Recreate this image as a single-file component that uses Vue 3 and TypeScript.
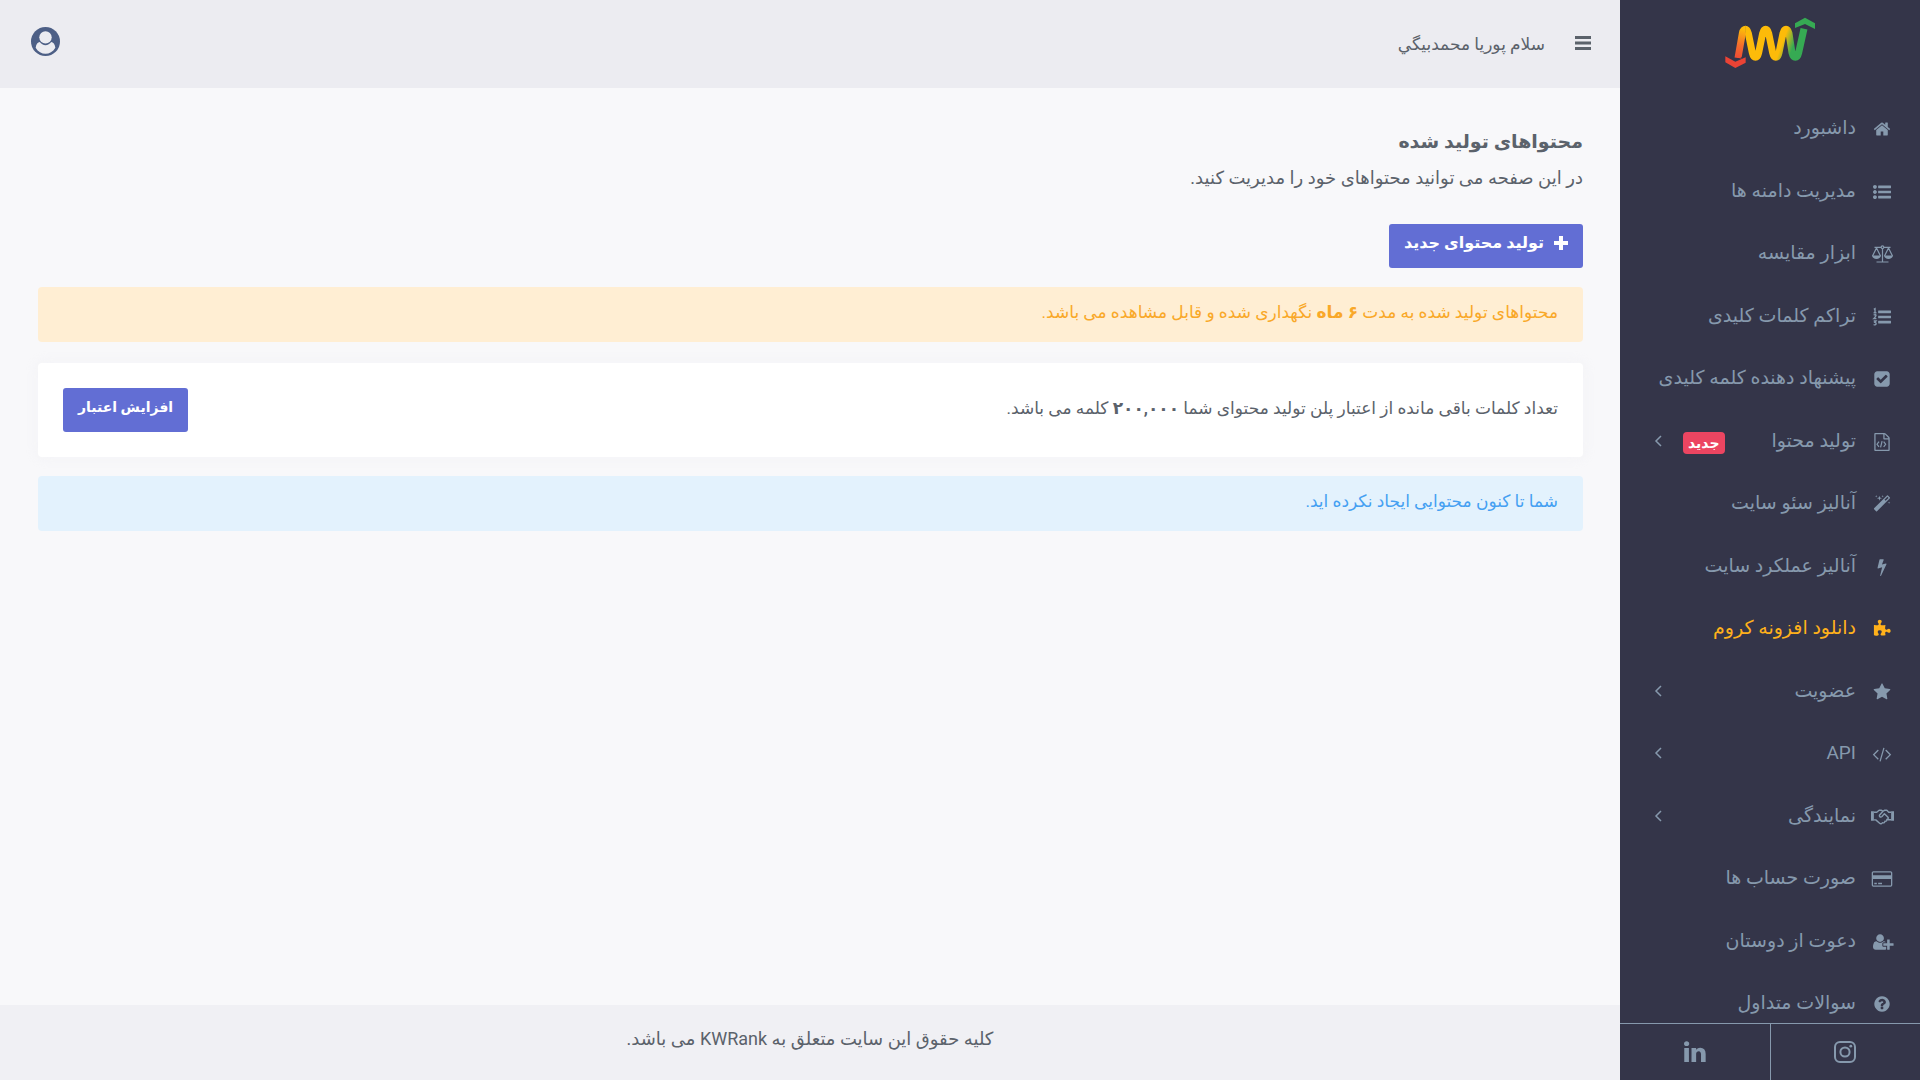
<script setup lang="ts">
interface NavItem {
  label: string
  icon: string
  badge?: string
  expandable?: boolean
  highlight?: boolean
}

const nav: NavItem[] = [
  { label: 'داشبورد', icon: 'home' },
  { label: 'مدیریت دامنه ها', icon: 'list' },
  { label: 'ابزار مقایسه', icon: 'scale' },
  { label: 'تراکم کلمات کلیدی', icon: 'numbered' },
  { label: 'پیشنهاد دهنده کلمه کلیدی', icon: 'check' },
  { label: 'تولید محتوا', icon: 'file', badge: 'جدید', expandable: true },
  { label: 'آنالیز سئو سایت', icon: 'magic' },
  { label: 'آنالیز عملکرد سایت', icon: 'bolt' },
  { label: 'دانلود افزونه کروم', icon: 'puzzle', highlight: true },
  { label: 'عضویت', icon: 'star', expandable: true },
  { label: 'API', icon: 'code', expandable: true },
  { label: 'نمایندگی', icon: 'handshake', expandable: true },
  { label: 'صورت حساب ها', icon: 'card' },
  { label: 'دعوت از دوستان', icon: 'userPlus' },
  { label: 'سوالات متداول', icon: 'question' },
]

const listBars =
  'M1792 1312v192q0 13-9.500 22.500t-22.500 9.500h-1216q-13 0-22.500-9.500t-9.500-22.500v-192q0-13 9.500-22.500t22.500-9.500h1216q13 0 22.500 9.500t9.500 22.500zm0-512v192q0 13-9.500 22.500t-22.500 9.500h-1216q-13 0-22.500-9.500t-9.500-22.500v-192q0-13 9.500-22.500t22.500-9.500h1216q13 0 22.500 9.500t9.500 22.500zm0-512v192q0 13-9.500 22.500t-22.500 9.500h-1216q-13 0-22.500-9.500t-9.500-22.500v-192q0-13 9.500-22.500t22.500-9.500h1216q13 0 22.500 9.500t9.500 22.500z'

const filled: Record<string, string> = {
  home: 'M1472 992v480q0 26-19 45t-45 19h-384v-384h-256v384h-384q-26 0-45-19t-19-45v-480q0-1 .5-3t.5-3l575-474 575 474q1 2 1 6zm223-69l-62 74q-8 9-21 11h-3q-13 0-21-7l-692-577-692 577q-12 8-24 7-13-2-21-11l-62-74q-8-10-7-23.5t11-21.500l719-599q32-26 76-26t76 26l244 204v-195q0-14 9-23t23-9h192q14 0 23 9t9 23v408l219 182q10 8 11 21.500t-7 23.500z',
  list:
    'M384 1408q0 80-56 136t-136 56-136-56-56-136 56-136 136-56 136 56 56 136zm0-512q0 80-56 136t-136 56-136-56-56-136 56-136 136-56 136 56 56 136zm0-512q0 80-56 136t-136 56-136-56-56-136 56-136 136-56 136 56 56 136z' +
    listBars,
  numbered: listBars,
  check: 'M813 1299l614-614q19-19 19-45t-19-45l-102-102q-19-19-45-19t-45 19l-467 467-211-211q-19-19-45-19t-45 19l-102 102q-19 19-19 45t19 45l358 358q19 19 45 19t45-19zm851-883v960q0 119-84.500 203.500t-203.500 84.500h-960q-119 0-203.500-84.500t-84.500-203.500v-960q0-119 84.500-203.500t203.500-84.500h960q119 0 203.500 84.500t84.500 203.500z',
  file: 'M1596 380q28 28 48 76t20 88v1152q0 40-28 68t-68 28h-1344q-40 0-68-28t-28-68v-1600q0-40 28-68t68-28h896q40 0 88 20t76 48zm-444-244v376h376q-10-29-22-41l-313-313q-12-12-41-22zm384 1528v-1024h-416q-40 0-68-28t-28-68v-416h-768v1536h1280z',
  magic: 'M1254 581l293-293-107-107-293 293zm447-293q0 27-18 45l-1286 1286q-18 18-45 18t-45-18l-198-198q-18-18-18-45t18-45l1286-1286q18-18 45-18t45 18l198 198q18 18 18 45zm-1351-190l98 30-98 30-30 98-30-98-98-30 98-30 30-98zm350 162l196 60-196 60-60 196-60-196-196-60 196-60 60-196zm930 478l98 30-98 30-30 98-30-98-98-30 98-30 30-98zm-640-640l98 30-98 30-30 98-30-98-98-30 98-30 30-98z',
  bolt: 'M1333 566q18 20 7 44l-540 1157q-13 25-42 25-4 0-14-2-17-5-25.500-19t-4.500-30l197-808-406 101q-4 1-12 1-18 0-31-11-18-15-13-39l201-825q4-14 16-23t28-9h328q19 0 32 12.500t13 29.500q0 8-5 18l-171 463 396-98q8-2 12-2 19 0 34 15z',
  puzzle: 'M1755 1083q0 81-44.500 135t-123.500 54q-41 0-77.500-17.500t-59-38-56.500-38-71-17.500q-110 0-110 124 0 39 16 115t15 115v5q-22 0-33 1-34 3-97.500 11.500t-115.500 13.500-98 5q-61 0-103-26.500t-42-83.500q0-37 17.500-71t38-56.500 38-59 17.500-77.500q0-79-54-123.500t-135-44.500q-84 0-143 45.500t-59 127.500q0 43 15 83t33.500 64.500 33.500 53 15 50.500q0 45-46 89-37 35-117 35-95 0-245-24-9-2-27.500-4t-27.500-4l-13-2q-1 0-3-1-2 0-2-1v-1024q2 1 17.500 3.500t34 5 21.500 3.500q150 24 245 24 80 0 117-35 46-44 46-89 0-22-15-50.500t-33.500-53-33.500-64.500-15-83q0-82 59-127.500t144-45.500q80 0 134 44.500t54 123.500q0 41-17.500 77.500t-38 59-38 56.500-17.500 71q0 57 42 83.500t103 26.500q64 0 180-15t163-17v2q-1 2-3.500 17.500t-5 34-3.500 21.500q-24 150-24 245 0 80 35 117 44 46 89 46 22 0 50.500-15t53-33.500 64.500-33.500 83-15q82 0 127.500 59t45.500 143z',
  star: 'M1728 647q0 22-26 48l-363 354 86 500q1 7 1 20 0 21-10.500 35.500t-30.500 14.500q-19 0-40-12l-449-236-449 236q-22 12-40 12-21 0-31.500-14.500t-10.500-35.500q0-6 2-20l86-500-364-354q-25-27-25-48 0-37 56-46l502-73 225-455q19-41 49-41t49 41l225 455 502 73q56 9 56 46z',
  code: 'M553 1399l-50 50q-10 10-23 10t-23-10l-466-466q-10-10-10-23t10-23l466-466q10-10 23-10t23 10l50 50q10 10 10 23t-10 23l-393 393 393 393q10 10 10 23t-10 23zm591-1067l-373 1291q-4 13-15.500 19.500t-23.500 2.500l-62-17q-13-4-19.500-15.500t-2.500-24.500l373-1291q4-13 15.500-19.500t23.500-2.500l62 17q13 4 19.500 15.500t2.500 24.500zm657 651l-466 466q-10 10-23 10t-23-10l-50-50q-10-10-10-23t10-23l393-393-393-393q-10-10-10-23t10-23l50-50q10-10 23-10t23 10l466 466q10 10 10 23t-10 23z',
  card: 'M1760 128q66 0 113 47t47 113v1216q0 66-47 113t-113 47h-1728q-66 0-113-47t-47-113v-1216q0-66 47-113t113-47zM32 256q-13 0-22.500 9.500t-9.500 22.500v224h1792v-224q0-13-9.500-22.500t-22.500-9.500zM1760 1536q13 0 22.500-9.500t9.500-22.500v-608h-1792v608q0 13 9.500 22.500t22.500 9.500zM128 1408v-128h256v128zM512 1408v-128h384v128z',
  userPlus: 'M704 896q-159 0-271.500-112.500t-112.500-271.500 112.500-271.500 271.500-112.500 271.500 112.500 112.500 271.500-112.500 271.500-271.500 112.500zm960 128h352q13 0 22.500 9.500t9.500 22.500v192q0 13-9.500 22.500t-22.500 9.500h-352v352q0 13-9.500 22.500t-22.500 9.500h-192q-13 0-22.500-9.500t-9.500-22.500v-352h-352q-13 0-22.500-9.500t-9.500-22.500v-192q0-13 9.500-22.500t22.500-9.500h352v-352q0-13 9.500-22.500t22.500-9.500h192q13 0 22.500 9.500t9.500 22.500v352zm-736 224q0 52 38 90t90 38h256v238q-68 50-171 50h-874q-121 0-194-69t-73-190q0-53 3.500-103.500t14-109 26.500-108.500 43-97.500 62-81 85.500-53.500 111.500-20q19 0 39 17 79 61 154.500 91.500t164.500 30.500 164.500-30.500 154.500-91.500q20-17 39-17 132 0 217 96h-223q-52 0-90 38t-38 90v192z',
  question: 'M1024 1376v-192q0-14-9-23t-23-9h-192q-14 0-23 9t-9 23v192q0 14 9 23t23 9h192q14 0 23-9t9-23zm256-672q0-88-55.500-163t-138.500-116-170-41q-243 0-371 213-15 24 8 42l132 100q7 6 19 6 16 0 25-12 53-68 86-92 34-24 86-24 48 0 85.500 26t37.500 59q0 38-20 61t-68 45q-63 28-115.500 86.500t-52.500 125.500v36q0 14 9 23t23 9h192q14 0 23-9t9-23q0-19 21.500-49.500t54.500-49.500q32-18 49-28.500t46-35 44.500-48 28-60.500 12.500-81zm384 192q0 209-103 385.500t-279.500 279.500-385.500 103-385.500-103-279.500-279.500-103-385.500 103-385.500 279.500-279.500 385.500-103 385.500 103 279.500 279.500 103 385.500z',
}
</script>

<template>
  <div class="app" dir="rtl" lang="fa">
    <aside class="sidebar">
      <a href="#" class="brand" aria-label="KWRank">
        <svg class="logo" viewBox="0 0 360 240" aria-hidden="true">
          <defs>
            <linearGradient id="rise" gradientUnits="userSpaceOnUse" x1="84" y1="176" x2="106" y2="84">
              <stop offset="0" stop-color="#ef4a35" />
              <stop offset="0.45" stop-color="#f4702c" />
              <stop offset="0.95" stop-color="#fdbb09" />
            </linearGradient>
            <linearGradient id="wave" gradientUnits="userSpaceOnUse" x1="224" y1="110" x2="256" y2="122">
              <stop offset="0" stop-color="#fdbb09" />
              <stop offset="1" stop-color="#36aa53" />
            </linearGradient>
          </defs>
          <path
            d="M106 88C111 88 113 92 115 100L127 158C131 176 142 176 146 158L158 100C162 84 172 84 176 100L188 158C192 176 203 176 207 158L219 100C223 84 233 84 237 100L246 158C250 176 262 176 266 158L282 86"
            fill="none" stroke="url(#wave)" stroke-width="21"
          />
          <path d="M84 174L97 100C99 91 102 88 107 88" fill="none" stroke="url(#rise)" stroke-width="21" />
          <path d="M248 84V68L285 50L322 68V88L285 76Z" fill="#343549" />
          <path d="M255 84V70L285 53L315 70V87L285 72Z" fill="#36aa53" />
          <path d="M46 164L76 180L110 166V174H46Z" fill="#343549" />
          <path d="M46 169L76 185L107 172V188L76 204L46 187Z" fill="#ea4335" />
        </svg>
      </a>

      <nav class="nav">
        <a v-for="item in nav" :key="item.label" href="#" class="item" :class="{ highlight: item.highlight }">
          <span class="icon">
            <svg v-if="item.icon === 'scale'" class="glyph wide" viewBox="0 0 22 18" aria-hidden="true">
              <g fill="none" stroke="currentColor" stroke-width="1.200">
                <path d="M3 2.300H9.500M12.500 2.300H19M11 3.500V16.500M5 17H17M5 3L1 11M5 3L9 11M17 3L13 11M17 3L21 11" />
                <circle cx="11" cy="2.200" r="1.300" />
              </g>
              <path d="M0.500 10.500H9.500C9 15 1 15 0.500 10.500ZM12.500 10.500H21.500C21 15 13 15 12.500 10.500Z" fill="currentColor" />
            </svg>
            <svg v-else-if="item.icon === 'handshake'" class="glyph wide" viewBox="0 0 24 18" aria-hidden="true">
              <path d="M0 3H3V13H0ZM21 3H24V13H21Z" fill="currentColor" />
              <path
                d="M3 4H6L8.500 2H11L12.500 3L14 2H16.500L18.500 4H21M3 12H5L9 15.500C10 16.500 11.500 16 12 15C13.500 15.500 14.500 14.500 14.500 13.500C16 13.800 17 12.500 16.500 11.500C18 11.500 18.500 10 17.500 9L14 5.500L11.500 8.500C10 9.800 8 8.500 9 6.800L12.500 3M17.500 11.800H21"
                fill="none" stroke="currentColor" stroke-width="1.500" stroke-linejoin="round"
              />
            </svg>
            <svg v-else class="glyph" viewBox="0 0 1792 1792" aria-hidden="true">
              <path :d="filled[item.icon]" fill="currentColor" fill-rule="evenodd" />
              <path
                v-if="item.icon === 'file'"
                d="M600 860L400 1120L600 1380M1060 860L1260 1120L1060 1380M905 800L755 1440"
                fill="none" stroke="currentColor" stroke-width="120"
              />
              <path
                v-if="item.icon === 'numbered'"
                d="M80 130L200 60V460M60 480H340M70 720Q200 600 290 700Q330 810 80 1060H340M70 1290H300L190 1430Q330 1440 300 1600Q220 1740 60 1640"
                fill="none" stroke="currentColor" stroke-width="140"
              />
            </svg>
          </span>
          <span class="label">{{ item.label }}</span>
          <span v-if="item.badge" class="badge">{{ item.badge }}</span>
          <svg v-if="item.expandable" class="chevron" viewBox="0 0 20 20" aria-hidden="true">
            <path d="M13 5L8 10L13 15" fill="none" stroke="currentColor" stroke-width="1.500" />
          </svg>
        </a>
      </nav>

      <div class="social">
        <a href="#" aria-label="Instagram">
          <svg class="social-icon" viewBox="0 0 22 22" aria-hidden="true">
            <rect x="1" y="1" width="20" height="20" rx="5" fill="none" stroke="currentColor" stroke-width="2" />
            <circle cx="11" cy="11" r="4.600" fill="none" stroke="currentColor" stroke-width="2" />
            <circle cx="16.800" cy="5.200" r="1.400" fill="currentColor" />
          </svg>
        </a>
        <a href="#" aria-label="LinkedIn">
          <svg class="social-icon" viewBox="128 128 1560 1560" aria-hidden="true">
            <path
              d="M477 625v991h-330v-991h330zm21-306q1 73-50.500 122t-135.500 49h-2q-82 0-132-49t-50-122q0-74 51.500-122.500t134.500-48.500 133 48.500 51 122.500zm1166 729v568h-329v-530q0-105-40.500-164.500t-126.500-59.500q-63 0-105.500 34.500t-63.500 85.500q-11 30-11 81v553h-329q2-399 2-647t-1-296l-1-48h329v144h-2q20-32 41-56t56.500-52 87-43.500 114.500-15.500q171 0 275 113.500t104 332.500z"
              fill="currentColor"
            />
          </svg>
        </a>
      </div>
    </aside>

    <div class="page">
      <header class="topbar">
        <button type="button" class="bare" aria-label="منو">
          <svg class="menu-icon" viewBox="0 0 16 14" aria-hidden="true">
            <path d="M0 1.500H16M0 7H16M0 12.500H16" fill="none" stroke="currentColor" stroke-width="3" />
          </svg>
        </button>
        <span class="greeting">سلام پوریا محمدبيگي</span>
        <button type="button" class="bare user" aria-label="حساب کاربری">
          <svg class="user-icon" viewBox="0 0 28 28" aria-hidden="true">
            <circle cx="14" cy="14" r="14" fill="#4d5f86" />
            <path d="M4.500 20C5 16.500 6.500 14.800 8.500 14.500C11 18.500 17 18.500 19.500 14.500C21.500 14.800 23 16.500 23.500 20C19 27.800 9 27.800 4.500 20Z" fill="#ececf1" />
            <circle cx="14" cy="10" r="6" fill="#ececf1" />
          </svg>
        </button>
      </header>

      <main class="content">
        <h1>محتواهای تولید شده</h1>
        <p class="subtitle">در این صفحه می توانید محتواهای خود را مدیریت کنید.</p>

        <button type="button" class="btn create">
          <svg class="plus" viewBox="0 0 14 14" aria-hidden="true">
            <path d="M7 0V14M0 7H14" fill="none" stroke="currentColor" stroke-width="4" />
          </svg>
          <span>تولید محتوای جدید</span>
        </button>

        <div class="alert warning">
          محتواهای تولید شده به مدت <b>۶ ماه</b> نگهداری شده و قابل مشاهده می باشد.
        </div>

        <section class="card">
          <p>تعداد کلمات باقی مانده از اعتبار پلن تولید محتوای شما <b>۲۰۰,۰۰۰</b> کلمه می باشد.</p>
          <button type="button" class="btn">افزایش اعتبار</button>
        </section>

        <div class="alert info">شما تا کنون محتوایی ایجاد نکرده اید.</div>
      </main>

      <footer class="footer">کلیه حقوق این سایت متعلق به KWRank می باشد.</footer>
    </div>
  </div>
</template>

<style>
body {
  margin: 0;
  background: #f8f8fa;
}
</style>

<style scoped>
.app {
  display: flex;
  min-height: 100vh;
  color: #5b626b;
  font-family: Roboto, "DejaVu Sans", sans-serif;
  font-size: 17px;
  line-height: 24px;
}

a {
  color: inherit;
  text-decoration: none;
}

button {
  font: inherit;
  cursor: pointer;
}

p,
h1 {
  margin: 0;
}

.sidebar {
  position: sticky;
  top: 0;
  display: flex;
  flex: 0 0 300px;
  flex-direction: column;
  height: 100vh;
  background: #343549;
  color: #8699ad;
}

.brand {
  display: flex;
  justify-content: center;
  height: 88px;
}

.logo {
  width: 120px;
  height: 80px;
}

.nav {
  display: flex;
  flex: 1;
  flex-direction: column;
  justify-content: space-between;
  min-height: 0;
  padding-top: 20px;
  overflow: hidden;
  font-size: 19px;
}

.item {
  display: flex;
  align-items: center;
  height: 40px;
  padding: 0 24px 0 28px;
  white-space: nowrap;
}

.highlight {
  color: #ffb11b;
}

.icon {
  display: flex;
  justify-content: center;
  width: 28px;
  margin-top: 2px;
  margin-left: 12px;
}

.glyph {
  width: 18px;
  height: 18px;
  overflow: visible;
}

.glyph.wide {
  width: 23px;
}

.label {
  flex: 1;
}

.badge {
  margin-top: 4px;
  padding: 0 5px;
  border-radius: 4px;
  background: #ec4561;
  color: #fff;
  font-size: 14px;
  font-weight: 700;
  line-height: 22px;
}

.chevron {
  width: 20px;
  height: 20px;
  margin-right: 15px;
}

.social {
  display: flex;
  height: 56px;
  border-top: 1px solid #8699ad;
}

.social a {
  display: flex;
  flex: 1;
  align-items: center;
  justify-content: center;
}

.social a + a {
  border-right: 1px solid #8699ad;
}

.social-icon {
  width: 22px;
  height: 22px;
}

.page {
  display: flex;
  flex: 1;
  flex-direction: column;
  min-width: 0;
}

.topbar {
  display: flex;
  align-items: center;
  height: 88px;
  padding: 0 29px 0 31px;
  background: #ececf1;
}

.bare {
  display: flex;
  padding: 0 0 2px;
  border: 0;
  background: none;
  color: inherit;
}

.menu-icon {
  width: 16px;
  height: 14px;
}

.greeting {
  margin-right: 30px;
}

.bare.user {
  margin-right: auto;
  padding-bottom: 5px;
}

.user-icon {
  width: 29px;
  height: 29px;
}

.content {
  display: flex;
  flex: 1;
  flex-direction: column;
  align-items: flex-start;
  padding: 40px 37px 20px 38px;
}

h1 {
  font-size: 19px;
  font-weight: 700;
  line-height: 28px;
}

.subtitle {
  margin: 10px 0 34px;
  font-size: 18px;
}

.btn {
  display: flex;
  align-items: center;
  gap: 10px;
  padding: 7px 15px 13px;
  border: 0;
  border-radius: 3px;
  background: #626ed4;
  color: #fff;
  font-size: 14px;
  font-weight: 700;
}

.create {
  font-size: 16px;
}

.plus {
  width: 14px;
  height: 14px;
}

.alert {
  align-self: stretch;
  margin-top: 19px;
  padding: 13px 25px 18px;
  border-radius: 4px;
}

.warning {
  background: #ffeed3;
  color: #f9a828;
}

.info {
  background: #e3f2fd;
  color: #45a0f2;
}

.card {
  display: flex;
  align-items: center;
  justify-content: space-between;
  align-self: stretch;
  margin-top: 21px;
  padding: 25px;
  border-radius: 4px;
  background: #fff;
  box-shadow: 0 0 13px rgba(236, 236, 241, 0.44);
}

.card p {
  padding-bottom: 4px;
}

.footer {
  padding: 22px 30px 29px;
  background: #f0f0f4;
  font-size: 18px;
  text-align: center;
}
</style>
